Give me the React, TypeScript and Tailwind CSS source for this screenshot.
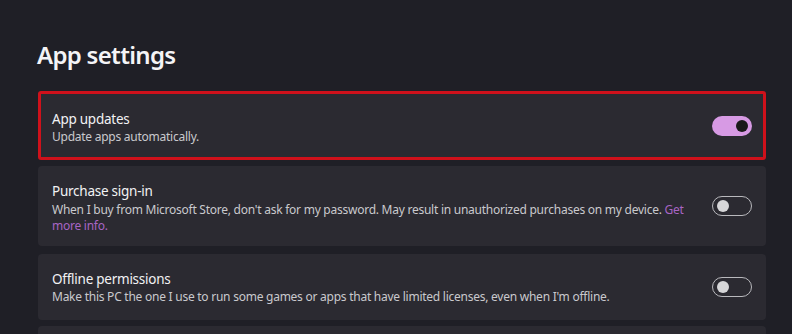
function Toggle({ on }: { on: boolean }) {
  if (on) {
    return (
      <div className="flex h-[20px] w-[40px] shrink-0 items-center justify-end rounded-full bg-[#d79ae4] pr-[4px]">
        <div className="h-[12px] w-[12px] rounded-full bg-[#1a1a1a]" />
      </div>
    );
  }
  return (
    <div className="flex h-[20px] w-[40px] shrink-0 items-center rounded-full border border-[#b9b9bd] pl-[4px]">
      <div className="h-[12px] w-[12px] rounded-full bg-[#d6d6d8]" />
    </div>
  );
}

export default function App() {
  return (
    <div
      className="h-[334px] w-[792px] overflow-hidden bg-[#1f1f26] text-white"
      style={{ fontFamily: '"Noto Sans", "Open Sans", sans-serif' }}
    >
      <div className="w-[766px] pl-[38px]">
        <h1 className="-ml-[1px] pt-[39px] text-[24px] font-semibold leading-[32px] tracking-[-0.7px] text-[#f4f4f6]">
          App settings
        </h1>

        <div className="mt-[20px] flex flex-col gap-[6px]">
          <div className="flex h-[69px] items-center justify-between rounded-[3px] border-[3px] border-[#cf111b] bg-[#2b2a31] pl-[11px] pr-[11px]">
            <div className="pt-[3px]">
              <div className="text-[13.5px] leading-[19px] tracking-[-0.25px] text-[#f2f2f4]">App updates</div>
              <div className="text-[12px] leading-[16px] tracking-[-0.25px] text-[#c9c9cd]">Update apps automatically.</div>
            </div>
            <Toggle on />
          </div>

          <div className="flex h-[80px] items-center justify-between rounded-[4px] bg-[#2b2a31] pl-[14px] pr-[14px]">
            <div className="w-[640px] pt-[4px]">
              <div className="mb-[1px] text-[13.5px] leading-[19px] tracking-[-0.25px] text-[#f2f2f4]">Purchase sign-in</div>
              <div className="text-[12px] leading-[16px] tracking-[-0.25px] text-[#c9c9cd]">
                When I buy from Microsoft Store, don't ask for my password. May result in unauthorized purchases on my device.{' '}
                <span className="text-[#a865c4]">Get more info.</span>
              </div>
            </div>
            <Toggle on={false} />
          </div>

          <div className="mt-[2px] flex h-[66px] items-center justify-between rounded-[4px] bg-[#2b2a31] pl-[14px] pr-[14px]">
            <div>
              <div className="text-[13.5px] leading-[19px] tracking-[-0.25px] text-[#f2f2f4]">Offline permissions</div>
              <div className="text-[12px] leading-[16px] tracking-[-0.25px] text-[#c9c9cd]">
                Make this PC the one I use to run some games or apps that have limited licenses, even when I'm offline.
              </div>
            </div>
            <Toggle on={false} />
          </div>

          <div className="h-[40px] rounded-[4px] bg-[#2b2a31]" />
        </div>
      </div>
    </div>
  );
}
